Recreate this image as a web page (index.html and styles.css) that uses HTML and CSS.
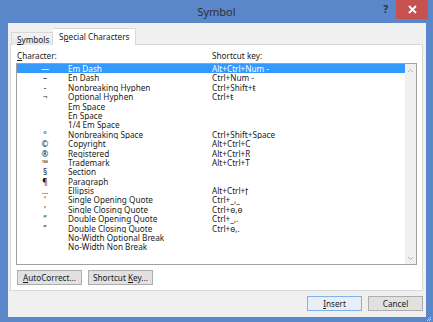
FILE: index.html
```html
<!DOCTYPE html>
<html lang="en">
<head>
  <meta charset="UTF-8">
  <title>Symbol</title>
  <link rel="stylesheet" href="styles.css">
</head>
<body>

  <div class="window">
    <div class="titlebar">
      <span></span>
      <span class="title">Symbol</span>
      <div class="controls">
        <span class="help">?</span>
        <span class="close">
          <svg width="9" height="9" viewBox="0 0 9 9"><path d="M1 1L8 8M8 1L1 8" stroke="#fff" stroke-width="1.8"/></svg>
        </span>
      </div>
    </div>

    <div class="client">
      <div class="tabs">
        <div class="tab"><u>S</u>ymbols</div>
        <div class="tab active">S<u>p</u>ecial Characters</div>
      </div>

      <div class="panel">
        <div class="labels">
          <span class="lbl-char"><u>C</u>haracter:</span>
          <span>Shortcut key:</span>
        </div>

        <div class="listbox">
          <div class="rows">
            <div class="row selected"><span class="sym">—</span><span class="name">Em Dash</span><span class="key">Alt+Ctrl+Num -</span></div>
            <div class="row"><span class="sym">–</span><span class="name">En Dash</span><span class="key">Ctrl+Num -</span></div>
            <div class="row"><span class="sym">-</span><span class="name">Nonbreaking Hyphen</span><span class="key">Ctrl+Shift+ŧ</span></div>
            <div class="row"><span class="sym">¬</span><span class="name">Optional Hyphen</span><span class="key">Ctrl+ŧ</span></div>
            <div class="row"><span class="sym"></span><span class="name">Em Space</span><span class="key"></span></div>
            <div class="row"><span class="sym"></span><span class="name">En Space</span><span class="key"></span></div>
            <div class="row"><span class="sym"></span><span class="name">1/4 Em Space</span><span class="key"></span></div>
            <div class="row"><span class="sym">°</span><span class="name">Nonbreaking Space</span><span class="key">Ctrl+Shift+Space</span></div>
            <div class="row"><span class="sym">©</span><span class="name">Copyright</span><span class="key">Alt+Ctrl+C</span></div>
            <div class="row"><span class="sym">®</span><span class="name">Registered</span><span class="key">Alt+Ctrl+R</span></div>
            <div class="row"><span class="sym">™</span><span class="name">Trademark</span><span class="key">Alt+Ctrl+T</span></div>
            <div class="row"><span class="sym">§</span><span class="name">Section</span><span class="key"></span></div>
            <div class="row"><span class="sym">¶</span><span class="name">Paragraph</span><span class="key"></span></div>
            <div class="row"><span class="sym">…</span><span class="name">Ellipsis</span><span class="key">Alt+Ctrl+ʈ</span></div>
            <div class="row"><span class="sym">‘</span><span class="name">Single Opening Quote</span><span class="key">Ctrl+_,_</span></div>
            <div class="row"><span class="sym">’</span><span class="name">Single Closing Quote</span><span class="key">Ctrl+ɵ,ɵ</span></div>
            <div class="row"><span class="sym">“</span><span class="name">Double Opening Quote</span><span class="key">Ctrl+_,.</span></div>
            <div class="row"><span class="sym">”</span><span class="name">Double Closing Quote</span><span class="key">Ctrl+ɵ,.</span></div>
            <div class="row"><span class="sym"></span><span class="name">No-Width Optional Break</span><span class="key"></span></div>
            <div class="row"><span class="sym"></span><span class="name">No-Width Non Break</span><span class="key"></span></div>
          </div>
          <div class="scrollbar">
            <svg width="7" height="5" viewBox="0 0 7 5"><path d="M1 4L3.5 1.5L6 4" fill="none" stroke="#b5b5b5" stroke-width="1"/></svg>
            <svg width="7" height="5" viewBox="0 0 7 5"><path d="M1 1L3.5 3.5L6 1" fill="none" stroke="#b5b5b5" stroke-width="1"/></svg>
          </div>
        </div>

        <div class="panel-buttons">
          <button><u>A</u>utoCorrect...</button>
          <button>Shortcut <u>K</u>ey...</button>
        </div>
      </div>

      <div class="footer">
        <button class="default"><u>I</u>nsert</button>
        <button>Cancel</button>
      </div>
    </div>
    <svg class="grip" width="6" height="6" viewBox="0 0 6 6"><path d="M5 1L1 5M5 3L3 5" stroke="#c8d6ec" stroke-width="1"/></svg>
  </div>

</body>
</html>
```

FILE: styles.css
```css
body {
  margin: 0;
  font-family: 'Noto Sans', sans-serif;
  font-size: 8.2px;
  color: #1a1a1a;
  background-color: #5a86ca;
}

.window {
  width: 433px;
  height: 322px;
  display: flex;
  flex-direction: column;
  position: relative;
}

/* title bar */
.titlebar {
  height: 23px;
  display: grid;
  grid-template-columns: 1fr auto 1fr;
  align-items: start;
}

.title {
  font-size: 11px;
  color: #2e2e2e;
  line-height: 23px;
}

.controls {
  justify-self: end;
  display: flex;
  align-items: start;
  margin-right: 5px;
}

.help {
  font-size: 10px;
  font-weight: bold;
  color: #2a3240;
  line-height: 19px;
  margin-right: 8px;
}

.close {
  width: 32px;
  height: 19px;
  background-color: #c75050;
  display: flex;
  align-items: center;
  justify-content: center;
}

/* dialog body */
.client {
  flex: 1;
  margin: 0 7px 5px 8px;
  padding: 6px 3px 4px 2px;
  background-color: #f0f0f0;
  display: flex;
  flex-direction: column;
}

.tabs {
  display: flex;
  align-items: flex-end;
  height: 16px;
  padding-left: 1px;
  margin-bottom: -1px;
  position: relative;
  z-index: 1;
}

.tab {
  height: 13px;
  line-height: 13px;
  padding: 0 5px;
  width: 42px;
  box-sizing: border-box;
  background: linear-gradient(#f3f3f3, #e8e8e8);
  border: 1px solid #d9d9d9;
  border-bottom: none;
}

.tab.active {
  width: 83px;
  height: 17px;
  line-height: 15px;
  background-color: #fff;
  background-image: none;
  border-left: none;
  padding-left: 6px;
}

.panel {
  background-color: #fff;
  border: 1px solid #d9d9d9;
  padding: 6px 5px 5px 5px;
}

.labels {
  display: flex;
  height: 10px;
  line-height: 10px;
  margin-bottom: 2px;
}

.lbl-char {
  width: 195px;
  padding-left: 1px;
}

.listbox {
  height: 200px;
  border: 1px solid #a0a0a0;
  display: flex;
}

.rows {
  flex: 1;
}

.row {
  display: flex;
  height: 9.4px;
  line-height: 9.4px;
  white-space: nowrap;
  overflow: hidden;
}

.row.selected {
  background-color: #3399ff;
  color: #fff;
}

.sym {
  flex: none;
  width: 46px;
  padding-left: 5px;
  text-align: center;
}

.name {
  flex: none;
  width: 144px;
}

.key {
  flex: 1;
}

.scrollbar {
  width: 11px;
  background-color: #f0f0f0;
  display: flex;
  flex-direction: column;
  justify-content: space-between;
  align-items: center;
  padding: 4px 0 3px;
}

button {
  font-family: inherit;
  font-size: 8.2px;
  color: #1a1a1a;
  height: 15px;
  width: 65px;
  padding: 0;
  background-color: #e1e1e1;
  border: 1px solid #adadad;
  line-height: 13px;
}

.panel-buttons {
  display: flex;
  gap: 6px;
  margin-top: 5px;
  padding-left: 1px;
}

.footer {
  display: flex;
  justify-content: flex-end;
  gap: 6px;
  margin-top: 5px;
}

.footer button {
  width: 55px;
}

.footer button.default {
  border-color: #7fb0e6;
  background-color: #e8eef5;
}

.grip {
  position: absolute;
  right: 1px;
  bottom: 0;
}
```
